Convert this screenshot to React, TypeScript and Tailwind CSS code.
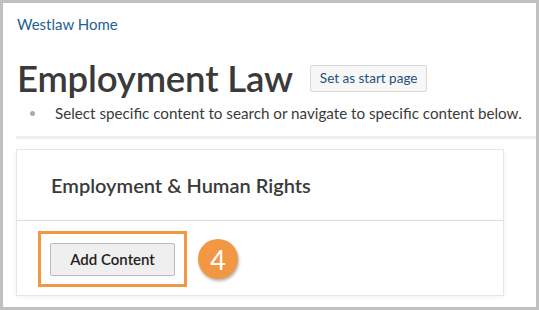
export default function App() {
  return (
    <div
      className="w-[539px] h-[310px] overflow-hidden border-[3px] border-[#c0c0c0] bg-white text-[#333]"
      style={{ fontFamily: 'Lato, "Open Sans", sans-serif' }}
    >
      {/* header */}
      <div className="pl-[14px] pt-[9px]">
        <a className="text-[15px] leading-[20px] text-[#1f5f94]">Westlaw Home</a>
        <div className="mt-[20px] flex items-center">
          <h1 className="text-[36.6px] leading-[44px] font-semibold text-[#3a3a3a] tracking-[-0.2px]">Employment Law</h1>
          <button className="ml-[17px] mt-[1px] h-[27px] px-[9px] rounded-[2px] border border-[#d8d8d8] bg-[#f7f7f7] text-[13.5px] text-[#1f4f7d]">
            Set as start page
          </button>
        </div>
        <ul className="mt-[2px] pl-[13px] flex items-center">
          <li className="text-[15.2px] leading-[22px] text-[#3a3a3a] flex items-center">
            <span className="w-[5px] h-[5px] rounded-full bg-[#aaa] mr-[20px]" />
            Select specific content to search or navigate to specific content below.
          </li>
        </ul>
      </div>

      {/* light band */}
      <div className="ml-[13px] mt-[12px] h-[3px] bg-[#eeeeee]" />

      {/* card */}
      <div className="ml-[13px] mt-[10px] w-[488px] h-[147px] border border-[#e6e6e6] bg-white shadow-[0_1px_5px_rgba(0,0,0,0.06)]">
        <div className="h-[71px] border-b border-[#dcdcdc] flex items-center pl-[34px]">
          <h2 className="text-[20px] font-semibold text-[#3a3a3a]">Employment &amp; Human Rights</h2>
        </div>
        <div className="flex items-center pl-[21px] pt-[10px]">
          <div className="w-[149px] h-[56px] border-[3px] border-[#f29845] flex items-center justify-center">
            <button className="w-[125px] h-[33px] rounded-[2px] border border-[#bcbcbc] bg-[#efefef] text-[15px] font-semibold text-[#222]">
              Add Content
            </button>
          </div>
          <div className="ml-[11px] w-[40px] h-[40px] rounded-full bg-[#f29845] shadow-[1px_2px_3px_rgba(0,0,0,0.3)] flex items-center justify-center text-white text-[27px] leading-none">
            4
          </div>
        </div>
      </div>
    </div>
  );
}
